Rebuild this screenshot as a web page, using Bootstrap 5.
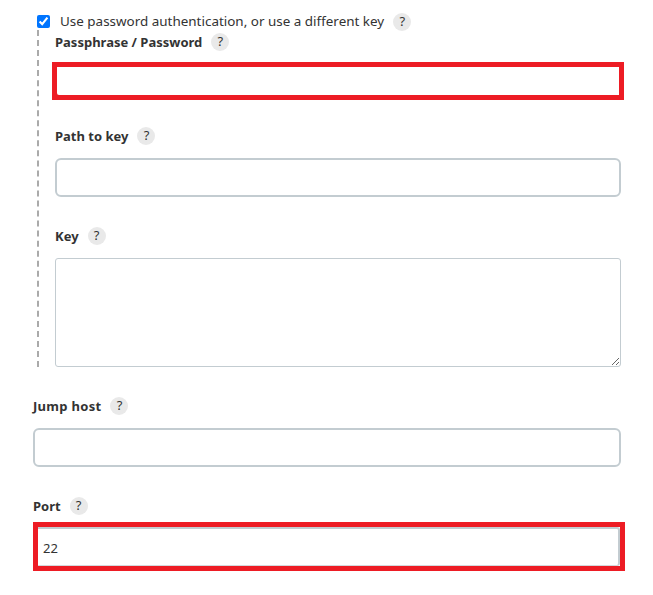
<!DOCTYPE html>
<html lang="en">
<head>
    <meta charset="UTF-8">
    <meta name="viewport" content="width=device-width, initial-scale=1.0">
    <title>SSH server</title>
    <link href="https://cdn.jsdelivr.net/npm/bootstrap@5.3.2/dist/css/bootstrap.min.css" rel="stylesheet">
    <style>
        body{
            background: #fff;
            color: #333;
            font-family: "Noto Sans", "Open Sans", sans-serif;
            font-size: 13px;
        }
        .page-wrap{
            padding: 13px 32px 0 33px;
        }
        .use-pass{
            margin-left: 4px;
            height: 17px;
            font-size: 13.45px;
        }
        .use-pass input{
            width: 13px;
            height: 13px;
            margin: 0 10px 0 0;
        }
        .sub-block{
            margin-left: 4px;
            border-left: 2px dashed #aaa;
            padding-left: 16px;
        }
        .field-label{
            height: 24px;
            margin-bottom: 10px;
            font-weight: 700;
        }
        .label-text{
            padding-top: 2px;
        }
        .help-dot{
            width: 18px;
            height: 18px;
            margin-left: 9px;
            border-radius: 50%;
            background: #e9e9e9;
            color: #333;
            font-weight: 400;
            font-size: 13px;
        }
        .field-box{
            height: 39px;
            margin-bottom: 27px;
            border: 2px solid #c3ccd1;
            border-radius: 6px;
            padding: 0 8px;
            color: #333;
            font-size: 13px;
            box-shadow: none;
        }
        .field-area{
            height: 109px;
            margin-bottom: 0;
            border-width: 1px;
            border-radius: 3px;
            display: block;
        }
        .red-mark{
            border: 5px solid #ed1c24;
        }
        .red-pass{
            margin: -2px -3px 24px;
            background: #ed1c24;
        }
        .red-pass .field-box{
            height: 28px;
            margin: 0;
            border: 0;
            border-radius: 0 0 0 2px;
        }
        .red-port{
            margin: -6px -4px 0 0;
            background: #fff;
        }
        .red-port .field-box{
            margin: 0;
            border-left: 0;
            border-bottom: 1px solid #d3d9dc;
            border-radius: 0 3px 3px 0;
            padding: 2px 5px 0;
        }
        .group-top{
            padding-top: 27px;
        }
        .jump-text{
            letter-spacing: .3px;
        }
    </style>
</head>
<body>
<div class="page-wrap">
    <div class="use-pass d-flex align-items-center">
        <input type="checkbox" checked>
        <span>Use password authentication, or use a different key</span>
        <span class="help-dot d-flex justify-content-center align-items-center">?</span>
    </div>
    <div class="sub-block">
        <div class="field-label d-flex align-items-center"><span class="label-text">Passphrase / Password</span> <span class="help-dot d-flex justify-content-center align-items-center">?</span></div>
        <div class="red-mark red-pass"><input type="text" class="form-control field-box"></div>
        <div class="field-label d-flex align-items-center"><span class="label-text">Path to key</span> <span class="help-dot d-flex justify-content-center align-items-center">?</span></div>
        <input type="text" class="form-control field-box">
        <div class="field-label d-flex align-items-center"><span class="label-text">Key</span> <span class="help-dot d-flex justify-content-center align-items-center">?</span></div>
        <textarea class="form-control field-box field-area"></textarea>
    </div>
    <div class="group-top">
        <div class="field-label d-flex align-items-center"><span class="label-text jump-text">Jump host</span> <span class="help-dot d-flex justify-content-center align-items-center">?</span></div>
        <input type="text" class="form-control field-box">
        <div class="field-label d-flex align-items-center"><span class="label-text">Port</span> <span class="help-dot d-flex justify-content-center align-items-center">?</span></div>
        <div class="red-mark red-port"><input type="text" class="form-control field-box" value="22"></div>
    </div>
</div>
<script src="https://cdn.jsdelivr.net/npm/bootstrap@5.3.2/dist/js/bootstrap.bundle.min.js"></script>
</body>
</html>
